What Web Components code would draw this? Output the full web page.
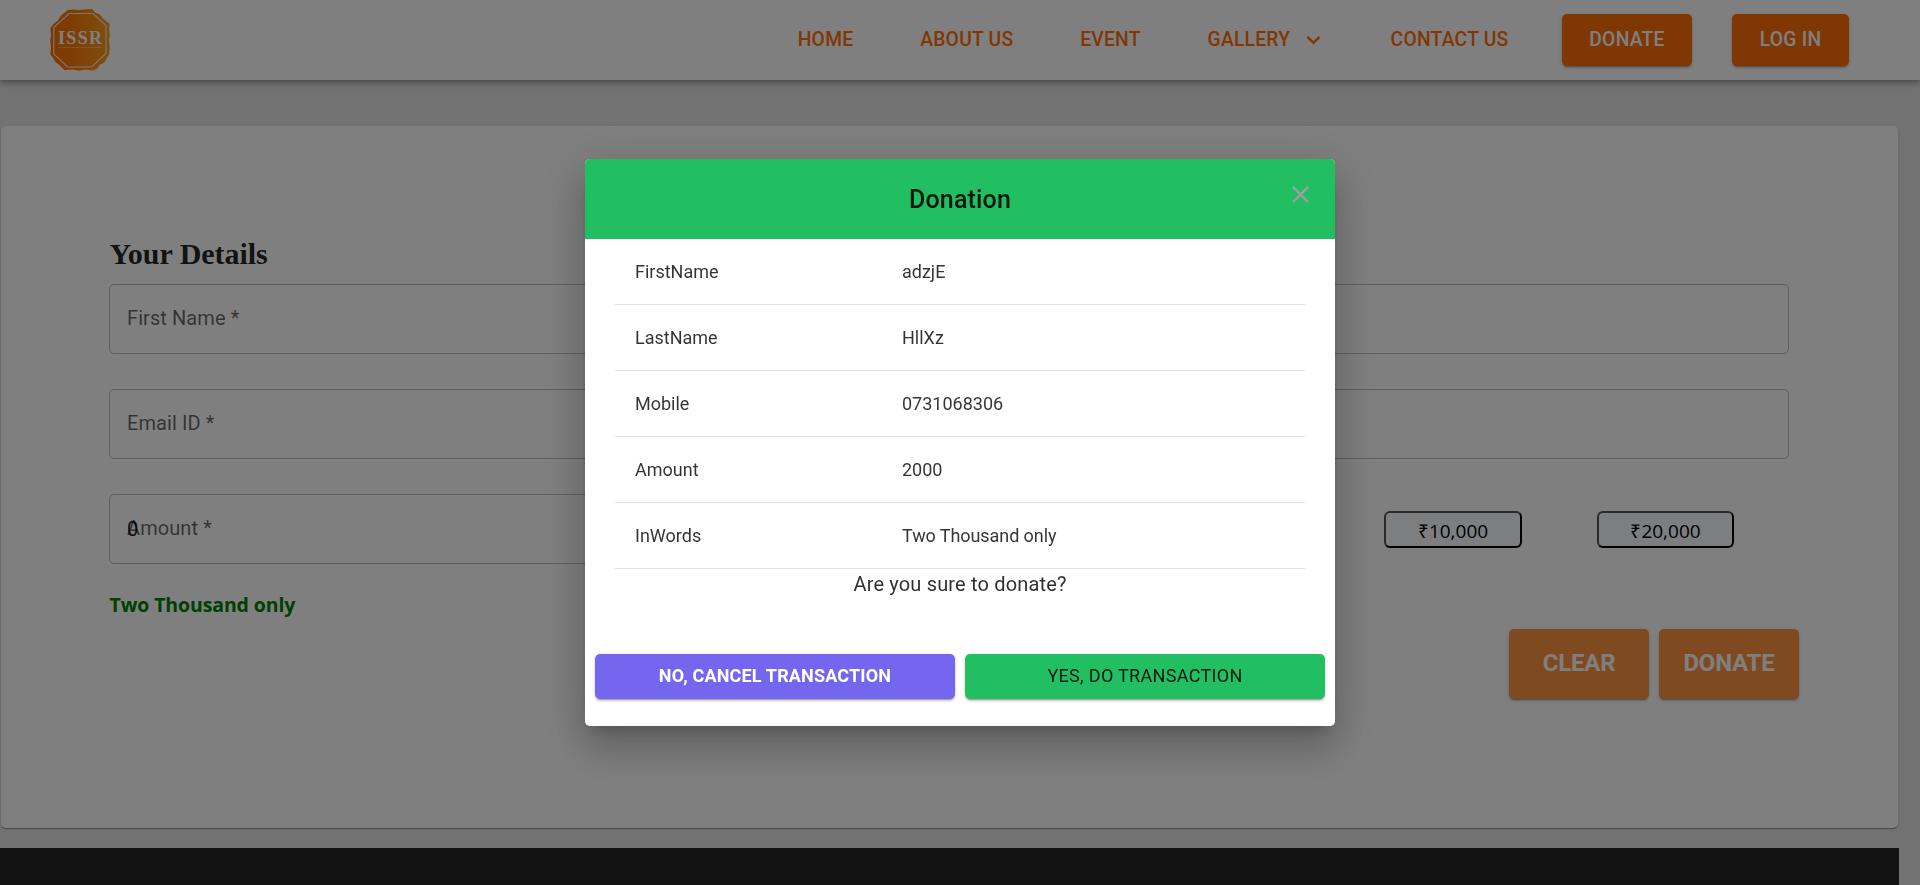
<!DOCTYPE html>
<html lang="en">
<head>
<meta charset="utf-8">
<title>ISSR Donation</title>
<style>
  html, body { margin: 0; height: 100%; overflow: hidden; }
  body { background: #e4e4e4; font-family: Roboto, sans-serif; color: rgba(0,0,0,.87); }
</style>
</head>
<body>
<issr-app></issr-app>

<script>
const define = (name, html) => customElements.define(name, class extends HTMLElement {
  constructor() {
    super();
    const t = document.createElement('template');
    t.innerHTML = html;
    this.attachShadow({ mode: 'open' }).append(t.content.cloneNode(true));
  }
});

define('issr-logo', `
<style>:host{display:block;width:62px;height:64px} svg{display:block}</style>
<svg width="62" height="64" viewBox="0 0 62 64">
  <defs><linearGradient id="g" x1="0" x2="1"><stop offset="0" stop-color="#fb7204"/><stop offset=".35" stop-color="#fd7a08"/><stop offset="1" stop-color="#ff9c1a"/></linearGradient></defs>
  <path fill="url(#g)" d="M19 2 L24 1.500 L30 2 L37 1.300 L43.500 1 L46 4.500 L51 6.500 L54 10.500 L57 13 L60.800 16 L60 21 L60.800 27 L60 33 L60.800 40 L60 46.500 L57.500 51 L55.500 54.500 L51 56.500 L48.500 60 L44 62.500 L37 61.500 L30 62.800 L24 61.500 L15.500 62 L11 57.500 L6 53.500 L4 50 L1.300 46 L2 40 L1.200 33 L2 27 L1.300 20 L5 15.500 L9 12.500 L12 7.500 Z"/>
  <path fill="none" stroke="#fff" stroke-opacity=".85" stroke-width="1.100" d="M20 5.500 H44 L57 17.500 V45.500 L42.500 59 H18.500 L4.800 46 V19.500 Z"/>
  <text x="31" y="36" text-anchor="middle" textLength="44" font-family="Liberation Serif, serif" font-weight="700" font-size="18" fill="#fff">ISSR</text>
  <path stroke="#fff" stroke-opacity=".4" stroke-width="1.200" stroke-dasharray="2.500 .6 1.300 .5 3 .7" d="M9.500 39.500 H53"/>
</svg>`);

define('nav-link', `
<style>:host{display:flex;align-items:center;font-weight:500;font-size:19.3px;line-height:24px;letter-spacing:.24px;color:#ff7008;white-space:nowrap}</style>
<slot></slot>`);

define('mui-button', `
<style>
:host{display:flex;align-items:center;justify-content:center;box-sizing:border-box;border-radius:5px;padding-bottom:2px;
  width:var(--w,auto);height:var(--h,45px);background:var(--bg);color:var(--fg,#fff);white-space:nowrap;
  font-weight:var(--weight,500);font-size:var(--size,18px);letter-spacing:var(--ls,0);
  box-shadow:0 3px 1px -2px rgba(0,0,0,.2),0 2px 2px 0 rgba(0,0,0,.14),0 1px 5px 0 rgba(0,0,0,.12)}
</style><slot></slot>`);

define('issr-header', `
<style>
:host{display:flex;align-items:center;height:80px;box-sizing:border-box;padding:0 71px 0 49px;background:#fff;position:relative;z-index:1;
  box-shadow:0 2px 4px -1px rgba(0,0,0,.2),0 4px 5px 0 rgba(0,0,0,.14),0 1px 10px 0 rgba(0,0,0,.12)}
nav{display:flex;align-items:center;margin-left:auto}
.links{display:flex;gap:66.800px;margin-right:53.500px}
.buttons{display:flex;gap:40px}
mui-button{--bg:#ff7008;--h:52px;--size:19.3px;--ls:.24px}
svg{margin-left:16px;margin-right:2.500px}
</style>
<issr-logo></issr-logo>
<nav>
  <div class="links">
    <nav-link>HOME</nav-link><nav-link>ABOUT US</nav-link><nav-link>EVENT</nav-link>
    <nav-link>GALLERY<svg width="15" height="10" viewBox="0 0 15 10"><path d="M1.500 1.800 L7.500 7.800 L13.500 1.800" fill="none" stroke="#ff7008" stroke-width="2.500"/></svg></nav-link>
    <nav-link>CONTACT US</nav-link>
  </div>
  <div class="buttons"><mui-button style="--w:130px">DONATE</mui-button><mui-button style="--w:117px">LOG IN</mui-button></div>
</nav>`);

define('text-field', `
<style>
:host{display:flex;align-items:center;box-sizing:border-box;height:70px;padding:0 17px;border:1px solid rgba(0,0,0,.25);border-radius:5px;
  font-size:20px;line-height:24px;position:relative;flex:1}
.label{color:rgba(0,0,0,.6);letter-spacing:.08px;margin-top:-2px}
.value{position:absolute;left:17px;top:22px;color:rgba(0,0,0,.9)}
</style>
<span class="label"><slot></slot></span><span class="value"><slot name="value"></slot></span>`);

define('amount-chip', `
<style>:host{display:flex;align-items:center;justify-content:center;box-sizing:border-box;height:37px;padding-top:4px;
  border:2px outset #000;border-radius:6px;background:#fbfdff;color:#000;font:19px/26px "Open Sans",sans-serif}</style>
<slot></slot>`);

define('donation-form', `
<style>
:host{display:block;box-sizing:border-box;margin:46px 22px 0 1px;height:702px;padding:110px 109px 0 108px;background:#fff;border-radius:5px;
  box-shadow:0 2px 1px -1px rgba(0,0,0,.2),0 1px 1px 0 rgba(0,0,0,.14),0 1px 3px 0 rgba(0,0,0,.12)}
h2{margin:0 0 13px .5px;font:700 30px/35px "Liberation Serif",serif;letter-spacing:-.03px}
.row{display:flex;gap:28px;margin-bottom:35px}
.amount{align-items:center;margin-bottom:26px}
.chips{flex:1;display:flex;justify-content:flex-end;gap:75px;padding-right:55px}
.words{margin:0 0 9px .5px;color:#008000;font:700 19.5px/30px "Open Sans",sans-serif;letter-spacing:-.12px}
.actions{display:flex;justify-content:flex-end;gap:10px;margin-right:-10px}
mui-button{--w:140px;--h:70px;--bg:#fe953f;--size:24px;--weight:700;--ls:-.22px}
</style>
<h2>Your Details</h2>
<div class="row"><text-field>First Name *</text-field><text-field></text-field></div>
<div class="row"><text-field>Email ID *</text-field><text-field></text-field></div>
<div class="row amount"><text-field>Amount *<span slot="value">0</span></text-field>
  <div class="chips"><amount-chip style="width:138px">₹10,000</amount-chip><amount-chip style="width:137px">₹20,000</amount-chip></div></div>
<div class="words">Two Thousand only</div>
<div class="actions"><mui-button>CLEAR</mui-button><mui-button>DONATE</mui-button></div>`);

define('site-footer', `<style>:host{display:block;margin:20px 21px 0 0;height:60px;background:#252525}</style>`);

define('detail-row', `
<style>
:host{display:grid;grid-template-columns:267px 1fr;align-items:center;box-sizing:border-box;height:66px;padding:0 20px;border-bottom:1px solid #e0e0e0;
  font-size:18px;line-height:26px;color:rgba(0,0,0,.8)}
</style>
<span><slot></slot></span><span><slot name="value"></slot></span>`);

define('donation-dialog', `
<style>
:host{position:fixed;inset:0;z-index:10;background:rgba(0,0,0,.5);display:flex;align-items:center;justify-content:center}
.paper{width:750px;height:567px;background:#fff;border-radius:5px;overflow:hidden}
.shadow{border-radius:5px;box-shadow:0 11px 15px -7px rgba(0,0,0,.2),0 24px 38px 3px rgba(0,0,0,.14),0 9px 46px 8px rgba(0,0,0,.12)}
header{position:relative;display:flex;align-items:center;justify-content:center;height:80px;background:#22bf62;font-weight:500;font-size:25px;letter-spacing:.17px}
header svg{position:absolute;right:25.500px;top:25.500px}
.body{padding:0 30px;height:405px}
p{margin:0;text-align:center;font-size:20px;line-height:30px;letter-spacing:.165px;color:rgba(0,0,0,.82)}
.actions{display:flex;gap:10px;padding:10px}
.actions mui-button{flex:1}
</style>
<div class="shadow"><div class="paper">
  <header>Donation
    <svg width="19" height="19" viewBox="0 0 19 19"><path d="M1.900 1.900 L17.100 17.100 M17.100 1.900 L1.900 17.100" stroke="#9e9e9e" stroke-width="2.400" fill="none"/></svg>
  </header>
  <div class="body">
    <detail-row>FirstName<span slot="value">adzjE</span></detail-row>
    <detail-row>LastName<span slot="value">HllXz</span></detail-row>
    <detail-row>Mobile<span slot="value">0731068306</span></detail-row>
    <detail-row>Amount<span slot="value">2000</span></detail-row>
    <detail-row>InWords<span slot="value" style="letter-spacing:-.08px">Two Thousand only</span></detail-row>
    <p>Are you sure to donate?</p>
  </div>
  <div class="actions">
    <mui-button style="--bg:#7466ee;--weight:700;--ls:.165px">NO, CANCEL TRANSACTION</mui-button>
    <mui-button style="--bg:#22bf62;--fg:rgba(0,0,0,.87);--weight:400;--ls:.315px">YES, DO TRANSACTION</mui-button>
  </div>
</div></div>`);

define('issr-app', `
<style>:host{display:block}</style>
<issr-header></issr-header><donation-form></donation-form><site-footer></site-footer><donation-dialog></donation-dialog>`);
</script>
</body>
</html>
